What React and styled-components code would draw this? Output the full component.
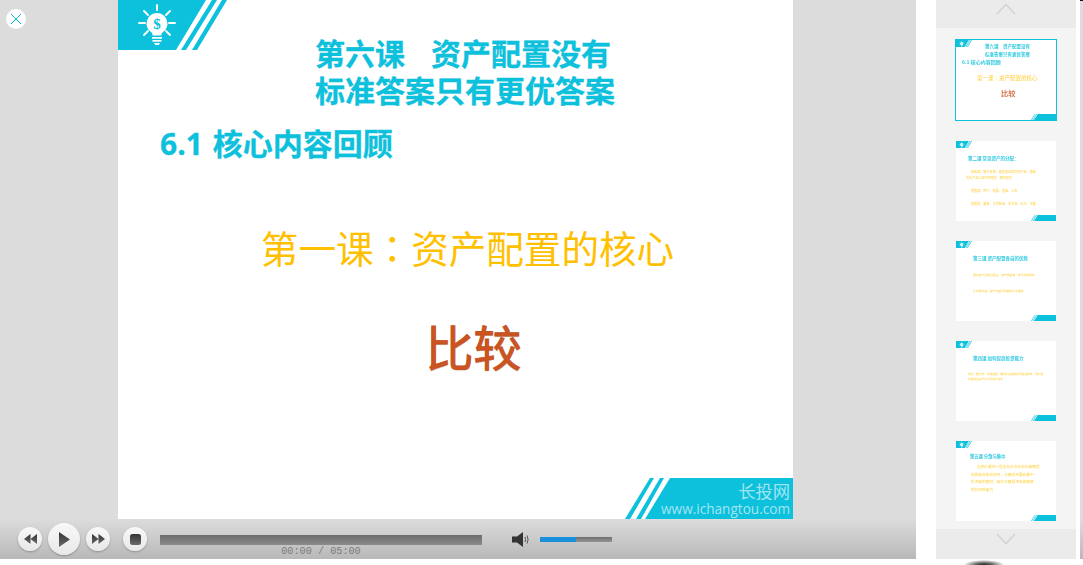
import React from 'react';
import styled, { createGlobalStyle } from 'styled-components';

const TEAL = '#0dc0dc';
const AMBER = '#ffc000';
const BAR_BG = 'linear-gradient(#dcdcdc, #b8b8b8)';
const CJK = '"Noto Sans CJK SC", sans-serif';

const GlobalStyle = createGlobalStyle`
  html, body {
    margin: 0;
    padding: 0;
    background: #fff;
    overflow: hidden;
  }
`;

const Page = styled.div`
  display: flex;
  width: 1083px;
  height: 565px;
  overflow: hidden;
  background: #fff;
  font-family: ${CJK};
`;

const Player = styled.div`
  display: flex;
  flex-direction: column;
  width: 916px;
  height: 559px;
`;

const Stage = styled.div`
  position: relative;
  height: 519px;
  padding-left: 118px;
  background: #dcdcdc;
`;

const CloseButton = styled.button`
  position: absolute;
  left: 6px;
  top: 9px;
  display: flex;
  align-items: center;
  justify-content: center;
  width: 20px;
  height: 20px;
  padding: 0;
  border: 0;
  border-radius: 50%;
  background: #fff;
`;

const Slide = styled.div`
  position: relative;
  width: 675px;
  height: 519px;
  background: #fff;
  overflow: hidden;
`;

const CornerTop = styled.svg`
  position: absolute;
  left: 0;
  top: 0;
`;

const CornerBottom = styled.svg`
  position: absolute;
  right: 0;
  bottom: 0;
`;

const Brand = styled.div`
  position: absolute;
  right: 3px;
  bottom: 3px;
  color: rgba(255, 255, 255, 0.62);
  text-align: right;
`;

const BrandName = styled.div`
  font-size: 17.3px;
  line-height: 21px;
`;

const BrandUrl = styled.div`
  font-family: "Open Sans", sans-serif;
  font-size: 13.6px;
  line-height: 15px;
`;

const SlideBody = styled.div`
  display: flex;
  flex-direction: column;
  padding-top: 34px;
`;

const Title = styled.div`
  margin-left: 197px;
  color: ${TEAL};
  font-size: 30px;
  font-weight: 700;
  line-height: 37px;
  -webkit-text-stroke: 0.3px ${TEAL};
`;

const TitleGap = styled.span`
  display: inline-block;
  width: 26px;
`;

const Subtitle = styled.div`
  margin: 16px 0 0 42px;
  color: ${TEAL};
  font-family: "Open Sans", ${CJK};
  font-size: 30px;
  font-weight: 700;
  line-height: 40px;
  word-spacing: 2px;
  -webkit-text-stroke: 0.3px ${TEAL};
`;

const Lesson = styled.div`
  margin-top: 58px;
  padding-left: 24px;
  color: ${AMBER};
  font-size: 37.6px;
  font-weight: 400;
  line-height: 50px;
  text-align: center;
`;

// the simplified face sets this colon low in its cell, the reference has it centred
const CentredColon = styled.span`
  font-family: "Noto Sans CJK TC", sans-serif;
`;

const Keyword = styled.div`
  margin-top: 41px;
  padding-left: 36px;
  color: #cc5420;
  font-size: 48px;
  font-weight: 400;
  line-height: 64px;
  text-align: center;
  -webkit-text-stroke: 0.9px #c4521f;
  text-shadow: 0 1px 1px rgba(120, 60, 30, 0.35);
`;

const Controls = styled.div`
  display: flex;
  align-items: center;
  height: 40px;
  padding-left: 18px;
  background: ${BAR_BG};
`;

const RoundButton = styled.button`
  display: flex;
  align-items: center;
  justify-content: center;
  flex: none;
  width: ${(p) => p.$size}px;
  height: ${(p) => p.$size}px;
  margin-right: ${(p) => p.$gap}px;
  padding: 0;
  border: 0;
  border-radius: 50%;
  background: linear-gradient(#f8f8f8, #e8e8e8);
  box-shadow: 0 1px 2px rgba(0, 0, 0, 0.25);
`;

const ProgressGroup = styled.div`
  align-self: flex-start;
  display: flex;
  flex-direction: column;
  flex: none;
  width: 322px;
  padding-top: 16px;
  margin-right: 30px;
`;

const ProgressTrack = styled.div`
  height: 10px;
  background: linear-gradient(#6c6c6c, #8c8c8c);
`;

const TimeLabel = styled.div`
  margin-top: 1px;
  color: #7c7c7c;
  font-family: "Liberation Mono", monospace;
  font-size: 10.2px;
  line-height: 12px;
  text-align: center;
`;

const VolumeIcon = styled.svg`
  flex: none;
  margin-right: 10px;
`;

const VolumeTrack = styled.div`
  flex: none;
  width: 72px;
  height: 5px;
  background: linear-gradient(#6f6f6f, #959595);
`;

const VolumeFill = styled.div`
  height: 100%;
  background: #1a8fdc;
`;

const Sidebar = styled.div`
  display: flex;
  flex-direction: column;
  flex: none;
  width: 140px;
  height: 559px;
  margin-left: 20px;
  background: #f4f4f4;
`;

const ArrowButton = styled.div`
  display: flex;
  justify-content: center;
  flex: none;
  box-sizing: border-box;
  height: ${(p) => p.$height}px;
  padding-top: ${(p) => p.$top}px;
  background: #ebebeb;
`;

const ThumbList = styled.div`
  display: flex;
  flex: 1;
  flex-direction: column;
  align-items: center;
  gap: 20px;
  padding-top: 11px;
  overflow: hidden;
`;

const Thumb = styled.div`
  position: relative;
  flex: none;
  box-sizing: border-box;
  width: ${(p) => (p.$active ? 102 : 100)}px;
  height: ${(p) => (p.$active ? 82 : 80)}px;
  padding: ${(p) => p.$pad};
  border: ${(p) => (p.$active ? `1px solid ${TEAL}` : '0')};
  background: #fff;
  overflow: hidden;
`;

const ThumbHeading = styled.div`
  color: ${TEAL};
  font-size: ${(p) => p.$size || 4.5}px;
  font-weight: 700;
  line-height: ${(p) => p.$line || 8}px;
  margin: ${(p) => p.$margin || 0};
  white-space: nowrap;
  opacity: 0.85;
  filter: blur(0.45px);
`;

const ThumbText = styled.div`
  color: ${AMBER};
  font-size: ${(p) => p.$size || 3.1}px;
  line-height: ${(p) => p.$line || 6}px;
  margin: ${(p) => p.$margin || 0};
  white-space: nowrap;
  opacity: 0.8;
  filter: blur(0.4px);
`;

const ThumbKeyword = styled.div`
  margin: 6px 0 0 45px;
  color: #cc5420;
  font-size: 7.2px;
  font-weight: 700;
  line-height: 10px;
  opacity: 0.8;
  filter: blur(0.35px);
`;

const ScrollStrip = styled.div`
  flex: none;
  width: 3px;
  height: 559px;
  margin-left: 4px;
  border-top: 1px solid #111;
  box-sizing: border-box;
  background: linear-gradient(#dcdcdc 93%, #b8b8b8);
`;

const DropShadow = styled.div`
  position: absolute;
  left: 964px;
  top: 560px;
  width: 40px;
  height: 10px;
  border-radius: 50%;
  background: radial-gradient(ellipse at center, #222 0%, #666 30%, rgba(255, 255, 255, 0) 72%);
`;

const Bulb = () => (
  <g>
    <g stroke="#fff" strokeWidth="1.9" strokeLinecap="round">
      <line x1="39" y1="5" x2="39" y2="10" />
      <line x1="21" y1="23" x2="27" y2="23" />
      <line x1="51" y1="23" x2="57" y2="23" />
      <line x1="26" y1="11" x2="30" y2="15" />
      <line x1="52" y1="11" x2="48" y2="15" />
      <line x1="26" y1="35" x2="30" y2="31" />
      <line x1="52" y1="35" x2="48" y2="31" />
    </g>
    <path d="M39 13a10.5 10.5 0 0 0-6 19c1.2 1 1.6 2 1.6 3.4h8.8c0-1.4.4-2.4 1.6-3.4a10.5 10.5 0 0 0-6-19z" fill="#fff" />
    <path d="M34 37h10v1.8H34zM34.5 40h9v1.8h-9zM36 43h6l-1.2 2h-3.6z" fill="#fff" />
    <text x="39" y="29" textAnchor="middle" fontSize="15" fontWeight="700" fontFamily="Liberation Serif, serif" fill={TEAL}>$</text>
  </g>
);

// top left ribbon, drawn in a 109x50 box and scaled down for the thumbnails
const TopRibbon = ({ width }) => (
  <CornerTop width={width} height={(width * 50) / 109} viewBox="0 0 109 50">
    <polygon points="0,0 88,0 58,50 0,50" fill={TEAL} />
    <polygon points="94,0 99,0 68,50 63,50" fill={TEAL} />
    <polygon points="104,0 109,0 79,50 74,50" fill={TEAL} />
    <Bulb />
  </CornerTop>
);

const BottomRibbon = ({ width }) => (
  <CornerBottom width={width} height={(width * 41) / 168} viewBox="0 0 168 41">
    <polygon points="25,0 29,0 5,41 0,41" fill={TEAL} />
    <polygon points="35,0 39,0 16,41 11,41" fill={TEAL} />
    <polygon points="45,0 168,0 168,41 20,41" fill={TEAL} />
  </CornerBottom>
);

const IconShade = () => (
  <defs>
    <linearGradient id="iconShade" x1="0" y1="0" x2="0" y2="1">
      <stop offset="0" stopColor="#333" />
      <stop offset="1" stopColor="#6a6a6a" />
    </linearGradient>
  </defs>
);

const thumbs = [
  {
    pad: '2px 0 0 0',
    active: true,
    content: (
      <>
        <ThumbHeading $margin="0 0 0 29px">第六课　资产配置没有</ThumbHeading>
        <ThumbHeading $margin="0 0 0 29px">标准答案只有更优答案</ThumbHeading>
        <ThumbHeading $size={5} $margin="0 0 0 6px">6.1 核心内容回顾</ThumbHeading>
        <ThumbText $size={5.5} $line={8} $margin="8px 0 0 21px">
          第一课<CentredColon>：</CentredColon>资产配置的核心
        </ThumbText>
        <ThumbKeyword>比较</ThumbKeyword>
      </>
    ),
  },
  {
    pad: '13px 0 0 12px',
    content: (
      <>
        <ThumbHeading>第二课 常见资产的分配：</ThumbHeading>
        <ThumbText $margin="7px 0 0 3px">现金类：银行存款、固定收益的理财产品、债券、</ThumbText>
        <ThumbText $margin="0 0 0 -2px">货币产品以及P2P网贷、保险理财</ThumbText>
        <ThumbText $margin="7px 0 0 3px">增值类：房产、股票、基金、上市</ThumbText>
        <ThumbText $margin="7px 0 0 3px">保值类：黄金、大宗商品、艺术品、红木、古董</ThumbText>
      </>
    ),
  },
  {
    pad: '13px 0 0 17px',
    content: (
      <>
        <ThumbHeading>第三课 资产配置各自的优势</ThumbHeading>
        <ThumbText $size={2.8} $margin="10px 0 0 0">最初资产合理分配后，资产收益有一笔可观的增加</ThumbText>
        <ThumbText $size={2.8} $margin="10px 0 0 0">从长期来看，资产收益可提高并不大幅度</ThumbText>
      </>
    ),
  },
  {
    pad: '13px 0 0 17px',
    content: (
      <>
        <ThumbHeading>第四课 如何提高投资能力</ThumbHeading>
        <ThumbText $size={2.7} $line={5} $margin="10px 0 0 -5px">通过一些比较、寻找差距，要用以后逐渐积累投资成本，再创造</ThumbText>
        <ThumbText $size={2.7} $line={5} $margin="0 0 0 -5px">判断资金资产会分析和工作表</ThumbText>
      </>
    ),
  },
  {
    pad: '11px 0 0 14px',
    content: (
      <>
        <ThumbHeading $size={4.3}>第五课 分散与集中</ThumbHeading>
        <ThumbText $size={3.7} $line={7.5} $margin="3px 0 0 7px">当我们遇到一些没有办法比较出来哪些</ThumbText>
        <ThumbText $size={3.7} $line={7.5} $margin="0 0 0 1px">他的收益的比较时，分散投资要比集中</ThumbText>
        <ThumbText $size={3.7} $line={7.5} $margin="0 0 0 1px">投资来的更好，因为分散投资具备更高</ThumbText>
        <ThumbText $size={3.7} $line={7.5} $margin="0 0 0 1px">的抗风险能力</ThumbText>
      </>
    ),
  },
];

function App() {
  return (
    <Page>
      <GlobalStyle />
      <Player>
        <Stage>
          <CloseButton>
            <svg width="12" height="12" viewBox="0 0 12 12">
              <path d="M1 1l10 10M11 1L1 11" stroke={TEAL} strokeWidth="1" fill="none" />
            </svg>
          </CloseButton>
          <Slide>
            <TopRibbon width={109} />
            <BottomRibbon width={168} />
            <Brand>
              <BrandName>长投网</BrandName>
              <BrandUrl>www.ichangtou.com</BrandUrl>
            </Brand>
            <SlideBody>
              <Title>
                第六课<TitleGap />资产配置没有
                <br />
                标准答案只有更优答案
              </Title>
              <Subtitle>6.1 核心内容回顾</Subtitle>
              <Lesson>
                第一课<CentredColon>：</CentredColon>资产配置的核心
              </Lesson>
              <Keyword>比较</Keyword>
            </SlideBody>
          </Slide>
        </Stage>
        <Controls>
          <RoundButton $size={24} $gap={6}>
            <svg width="13" height="10" viewBox="0 0 13 10">
              <IconShade />
              <path d="M6.5 0v10L0 5zM13 0v10L6.5 5z" fill="url(#iconShade)" />
            </svg>
          </RoundButton>
          <RoundButton $size={32} $gap={6}>
            <svg width="11" height="15" viewBox="0 0 11 15">
              <path d="M0 0l11 7.5L0 15z" fill="url(#iconShade)" />
            </svg>
          </RoundButton>
          <RoundButton $size={24} $gap={13}>
            <svg width="13" height="10" viewBox="0 0 13 10">
              <path d="M0 0v10l6.5-5zM6.5 0v10L13 5z" fill="url(#iconShade)" />
            </svg>
          </RoundButton>
          <RoundButton $size={24} $gap={13}>
            <svg width="11" height="11" viewBox="0 0 11 11">
              <rect width="11" height="11" rx="2.5" fill="url(#iconShade)" />
            </svg>
          </RoundButton>
          <ProgressGroup>
            <ProgressTrack />
            <TimeLabel>00:00 / 05:00</TimeLabel>
          </ProgressGroup>
          <VolumeIcon width="18" height="15" viewBox="0 0 18 15">
            <path d="M0 4.5h5L11 0v15l-6-4.500H0z" fill="#333" />
            <path d="M13 5q1.300 2.500 0 5M15 3.500q2.200 4 0 8" stroke="#555" strokeWidth="1" fill="none" />
          </VolumeIcon>
          <VolumeTrack>
            <VolumeFill style={{ width: `${(36 / 72) * 100}%` }} />
          </VolumeTrack>
        </Controls>
      </Player>
      <Sidebar>
        <ArrowButton $height={28} $top={3}>
          <svg width="20" height="12" viewBox="0 0 20 12">
            <path d="M1 11l9-9.500 9 9.500" stroke="#d4d4d4" strokeWidth="1.6" fill="none" />
          </svg>
        </ArrowButton>
        <ThumbList>
          {thumbs.map((t, i) => (
            <Thumb key={i} $active={t.active} $pad={t.pad}>
              <TopRibbon width={16} />
              <BottomRibbon width={25} />
              {t.content}
            </Thumb>
          ))}
        </ThumbList>
        <ArrowButton $height={30} $top={4}>
          <svg width="20" height="12" viewBox="0 0 20 12">
            <path d="M1 1l9 9.500 9-9.500" stroke="#d4d4d4" strokeWidth="1.6" fill="none" />
          </svg>
        </ArrowButton>
      </Sidebar>
      <ScrollStrip />
      <DropShadow />
    </Page>
  );
}

export default App;
